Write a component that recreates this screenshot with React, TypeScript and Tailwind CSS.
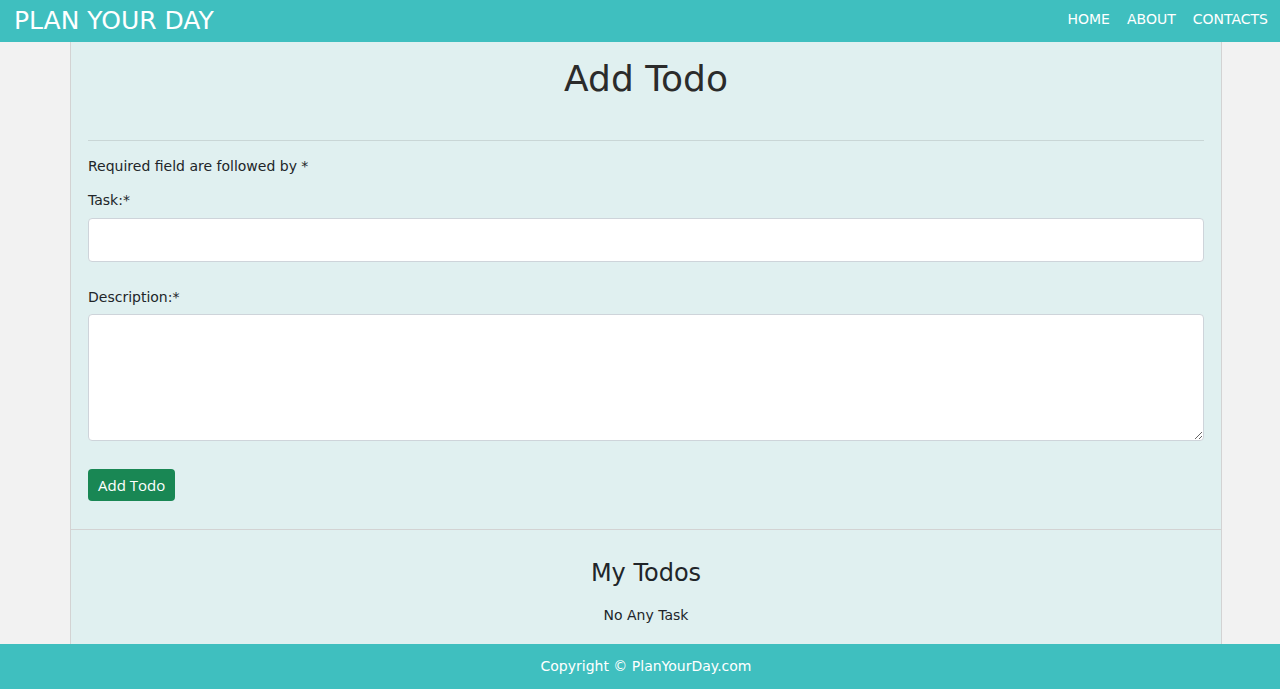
export default function App() {
  return (
    <div className="min-h-[689px] flex flex-col bg-[#f2f2f2] text-[#212529]" style={{ fontFamily: '"DejaVu Sans", Verdana, sans-serif' }}>
      <header className="h-[42px] bg-[#3fbfbf] flex items-center justify-between pl-[14px] pr-[11px] text-white">
        <div className="text-[25px] leading-none -mt-[2px]">PLAN YOUR DAY</div>
        <nav className="flex gap-[17px] text-[14px] -mt-[3px] mr-[1px]">
          <a href="#">HOME</a>
          <a href="#">ABOUT</a>
          <a href="#">CONTACTS</a>
        </nav>
      </header>

      <main className="flex-1 w-[1152px] ml-[70px] bg-[#e0f0f0] border-x border-[#d3d3d3]">
        <section className="px-[17px] pb-[28px]">
          <h1 className="text-[36px] text-center text-[#2b2b2b] pt-[15px] pb-[39px] leading-[44px]">Add Todo</h1>
          <hr className="border-t border-[#c9d6d6]" />
          <p className="text-[14px] mt-[15px]">Required field are followed by *</p>
          <label className="block text-[14px] mt-[13px]">Task:*</label>
          <input className="block w-full h-[44px] mt-[7px] bg-white border border-[#ced4da] rounded-[4px]" />
          <label className="block text-[14px] mt-[25px]">Description:*</label>
          <textarea className="block w-full h-[127px] mt-[6px] bg-white border border-[#ced4da] rounded-[4px]" />
          <button className="mt-[28px] h-[32px] px-[10px] bg-[#198754] text-white text-[15px] rounded-[4px]" style={{ fontFamily: '"Open Sans", sans-serif' }}>Add Todo</button>
        </section>
        <section className="border-t border-[#d3d3d3] text-center pt-[27px] pb-[16px]">
          <h2 className="text-[24px] leading-[32px]">My Todos</h2>
          <p className="text-[14px] mt-[16px]">No Any Task</p>
        </section>
      </main>

      <footer className="h-[45px] bg-[#3fbfbf] flex items-center justify-center pl-[12px] text-white text-[14px]">
        Copyright © PlanYourDay.com
      </footer>
    </div>
  );
}
